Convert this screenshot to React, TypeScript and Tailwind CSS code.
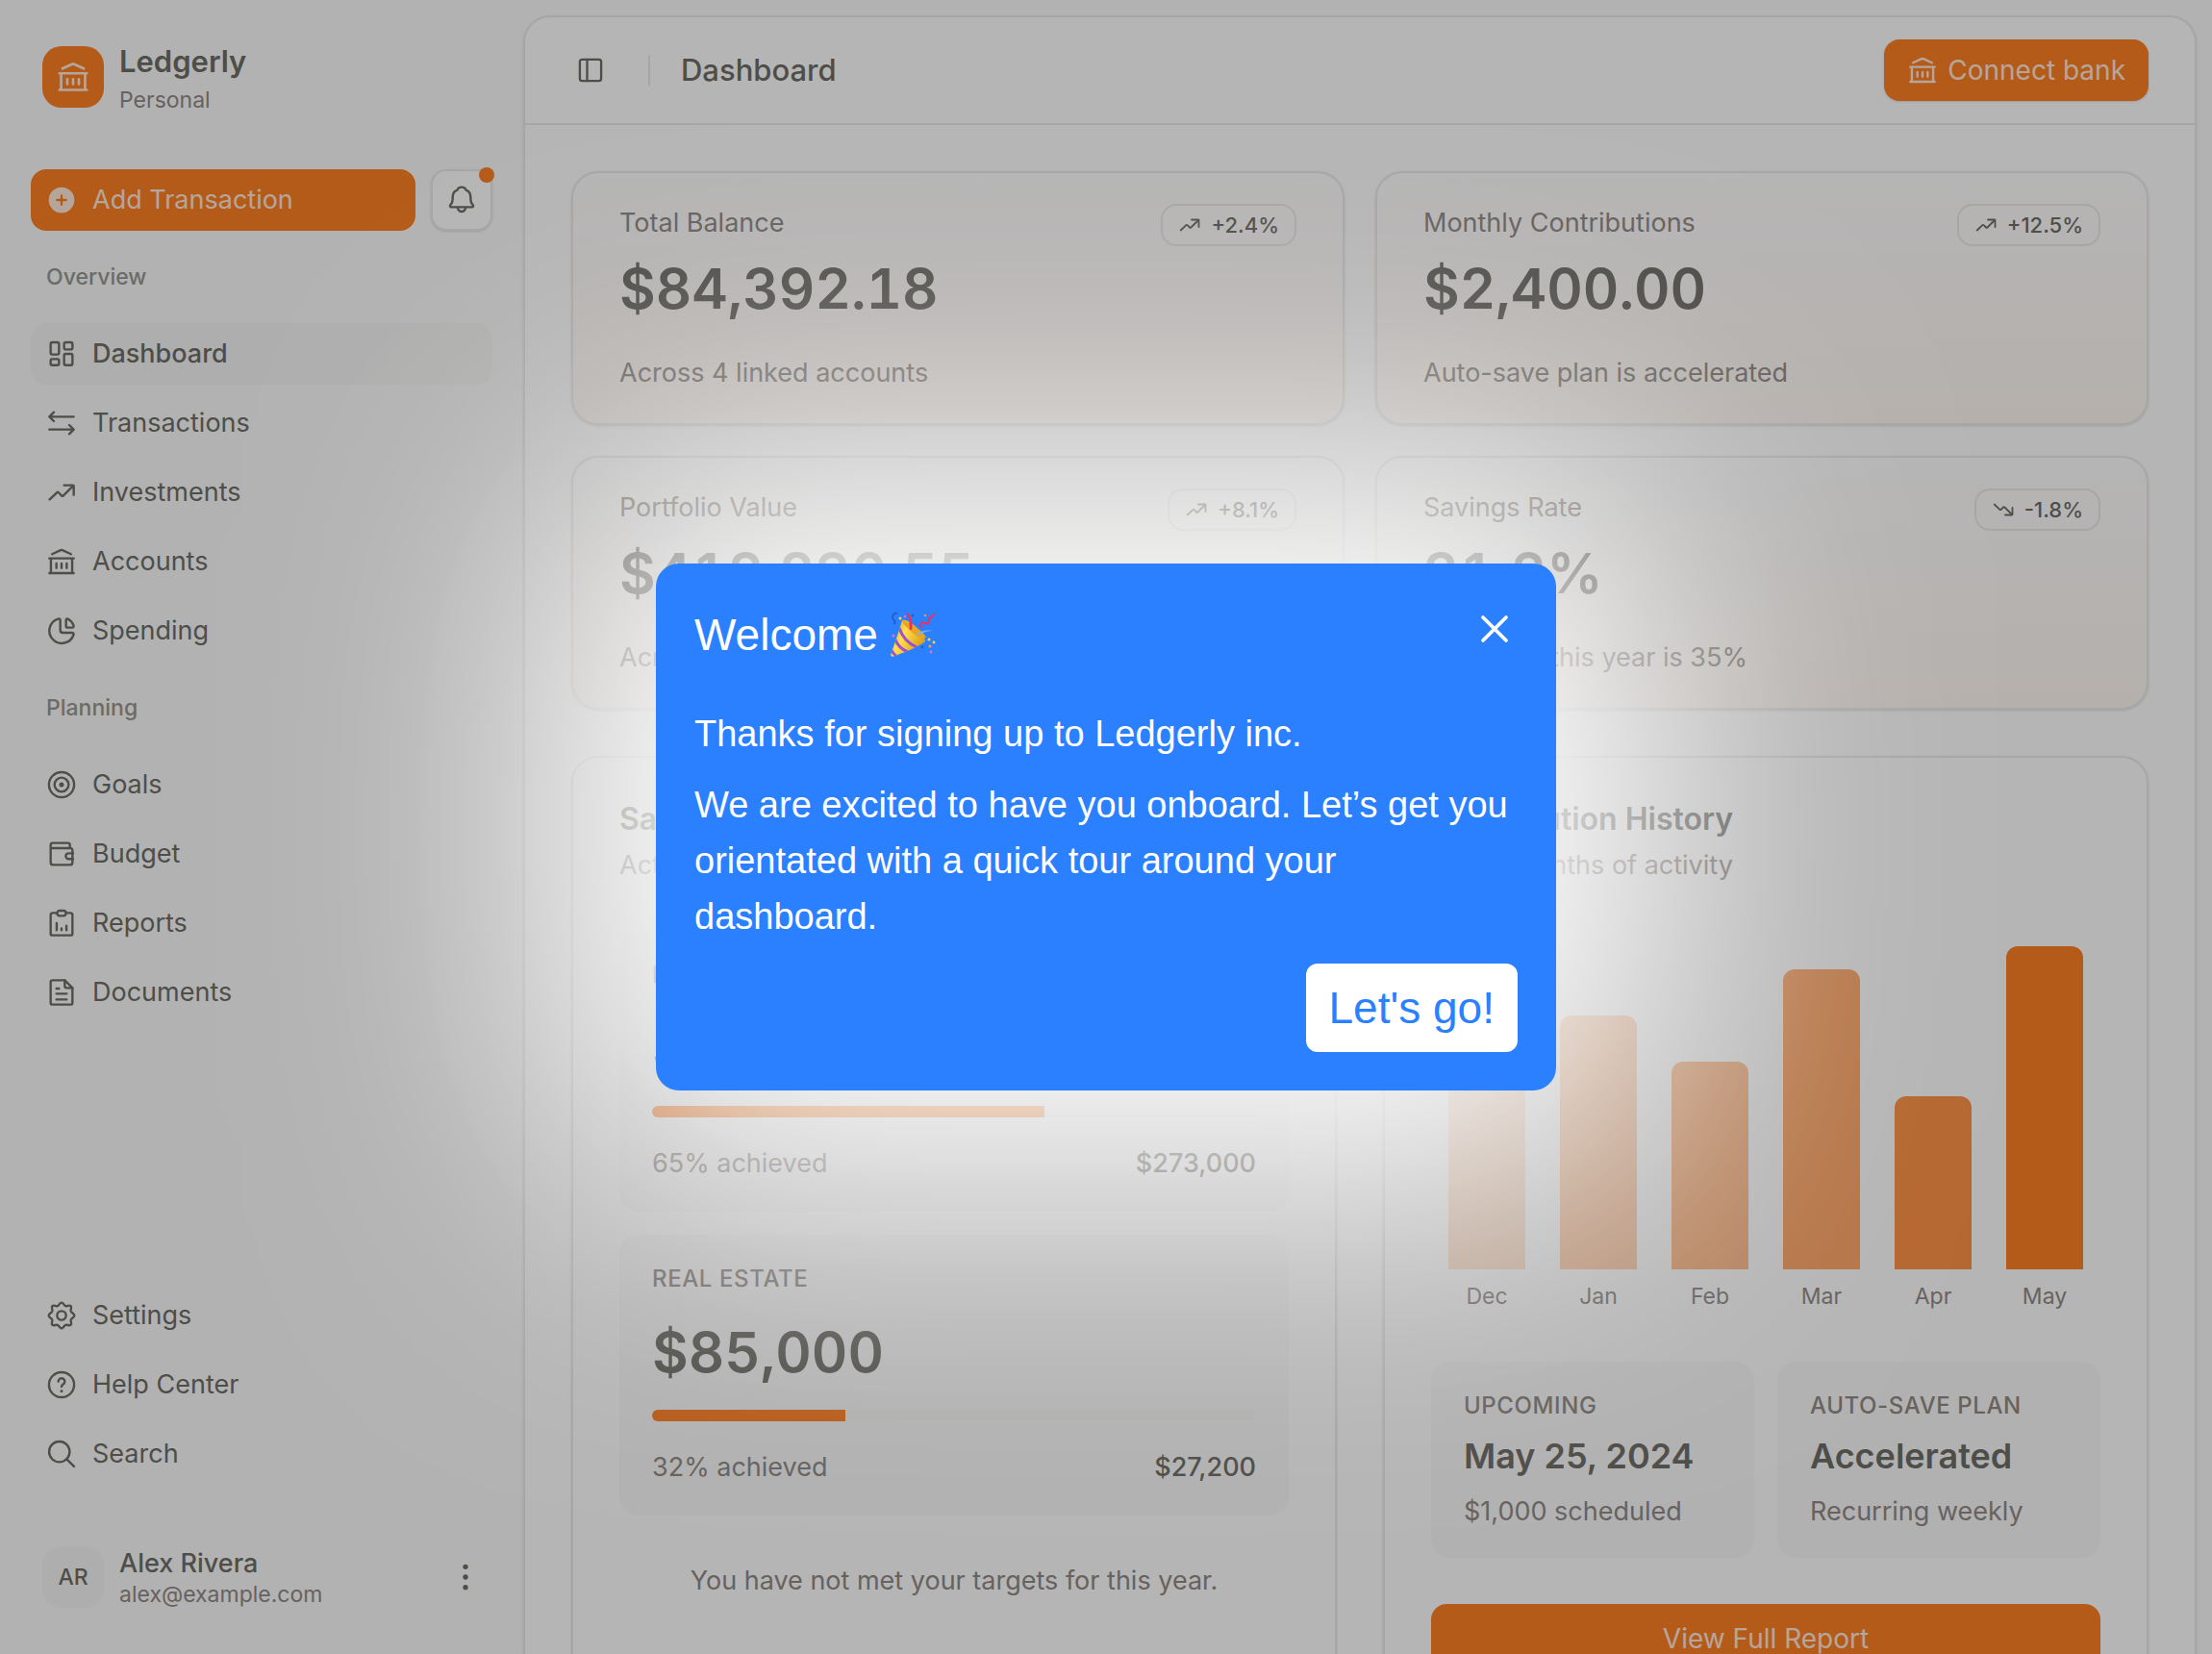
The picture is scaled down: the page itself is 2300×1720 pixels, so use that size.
import React from "react";

const icons = {
  bank: (
    <>
      <path d="M4.600 6.200 11.300 3.100a1.700 1.700 0 0 1 1.400 0l6.700 3.100" />
      <path d="M3.700 9.500V21M20.300 9.500V21M2.500 9.500h19M2.500 21h19M8 13.500v3.500M12 13.500v3.500M16 13.500v3.500" />
    </>
  ),
  bell: (
    <>
      <path d="M4 17.500h16c1 0 1.400-1 .7-1.700-1.300-1.300-1.700-2.300-1.700-4.300V10c0-3-1.500-5-3.600-5.700C15 2.800 13.700 2 12 2s-3 .8-3.400 2.300C6.500 5 5 7 5 10v1.500c0 2-.4 3-1.700 4.300-.7.700-.3 1.700.7 1.700Z" />
      <path d="M9 18a3 3 0 0 0 6 0" />
    </>
  ),
  dashboard: (
    <>
      <rect x="3.500" y="3" width="6.500" height="9.500" rx="1.200" />
      <rect x="14" y="3" width="6.500" height="5.500" rx="1.200" />
      <rect x="3.500" y="16" width="6.500" height="4.800" rx="1.200" />
      <rect x="14" y="12" width="6.500" height="8.800" rx="1.200" />
    </>
  ),
  transfer: (
    <>
      <path d="M21.500 7H2.500M6 3.500 2.500 7 6 10.500" />
      <path d="M2.500 17h19M18 13.500l3.500 3.500-3.500 3.500" />
    </>
  ),
  trendUp: (
    <>
      <path d="m2.700 17.500 5.600-5.300a1 1 0 0 1 1.400 0l2.300 2.300a1 1 0 0 0 1.400 0L21 7" />
      <path d="M14 6.500h7a.5.5 0 0 1 .5.500v7" />
    </>
  ),
  trendDown: (
    <>
      <path d="m2.700 6.500 5.600 5.300a1 1 0 0 0 1.400 0l2.300-2.300a1 1 0 0 1 1.400 0L21 17" />
      <path d="M14 17.500h7a.5.5 0 0 0 .5-.5v-7" />
    </>
  ),
  pie: (
    <>
      <path d="M11 3.700c0-.9-.8-1.300-1.700-1A9.700 9.700 0 1 0 21.400 15c.2-.9-.3-1.500-1.200-1.500H13a2 2 0 0 1-2-2Z" />
      <path d="M15.500 3.500c0-.9.600-1.200 1.400-.8a9 9 0 0 1 4.500 5.300c.2.800-.2 1.500-1 1.500H17a1.500 1.500 0 0 1-1.500-1.500Z" />
    </>
  ),
  target: (
    <>
      <circle cx="12" cy="12" r="9.800" />
      <circle cx="12" cy="12" r="5.500" />
      <circle cx="12" cy="12" r="1" fill="currentColor" />
    </>
  ),
  wallet: (
    <>
      <path d="M18.500 7.500V5A1.500 1.500 0 0 0 17 3.500H5A1.500 1.500 0 0 0 3.500 5v13.500a2 2 0 0 0 2 2h13a2 2 0 0 0 2-2V9a1.500 1.500 0 0 0-1.500-1.500H3.500" />
      <path d="M21 11.500h-3.500a2.200 2.200 0 0 0 0 4.400H21" />
    </>
  ),
  report: (
    <>
      <path d="M8.500 4H5a1.500 1.500 0 0 0-1.500 1.500v14.500A1.500 1.500 0 0 0 5 21.500h14a1.500 1.500 0 0 0 1.500-1.500V5.500A1.500 1.500 0 0 0 19 4h-3.500" />
      <rect x="8.500" y="2.300" width="7" height="4" rx="2" />
      <path d="M8.200 12V17.500M12 16V17.500M15.800 14V17.500" />
    </>
  ),
  file: (
    <>
      <path d="M14.500 2.500H5A1.500 1.500 0 0 0 3.500 4v16A1.500 1.500 0 0 0 5 21.500h14a1.500 1.500 0 0 0 1.500-1.500V8.500Z" />
      <path d="M14.500 2.500V7A1.500 1.500 0 0 0 16 8.500h4.500M8 9h2M8 13h8M8 17.500h8" />
    </>
  ),
  settings: (
    <>
      <path d="M12 2c1.600 0 1.700 2.100 3.200 2.600 1.400.6 2.900-1.100 4 0 1.100 1.200-.5 2.600.1 4.100.6 1.400 2.700 1.600 2.700 3.300s-2.100 1.800-2.700 3.300c-.6 1.400 1.100 2.900 0 4-1.200 1.100-2.600-.5-4.100.1C13.700 20 13.600 22 12 22s-1.700-2-3.200-2.600c-1.500-.6-2.900 1-4.100-.1-1.100-1.100.6-2.600 0-4C4.100 13.800 2 13.700 2 12s2.100-1.900 2.700-3.300c.6-1.500-1-2.900.1-4.100 1.100-1.100 2.600.6 4 0C10.300 4.100 10.400 2 12 2Z" />
      <circle cx="12" cy="12" r="3.500" />
    </>
  ),
  help: (
    <>
      <circle cx="12" cy="12" r="9.800" />
      <path d="M9.500 9.500a2.500 2.500 0 1 1 3.900 2c-.7.500-1.400 1-1.400 2" />
      <path d="M12 17h.01" strokeWidth="2.200" />
    </>
  ),
  search: (
    <>
      <circle cx="10.300" cy="10.300" r="8" />
      <path d="m16 16 5.700 5.700" />
    </>
  ),
  panel: (
    <>
      <rect x="2.500" y="2.500" width="19" height="19" rx="2" />
      <path d="M9 2.500v19" />
    </>
  ),
  close: <path d="M3 3l18 18M21 3 3 21" />,
};

type IconName = keyof typeof icons;

const Icon: React.FC<{ name: IconName; className?: string; stroke?: number }> = ({
  name,
  className = "size-8",
  stroke = 1.8,
}) => (
  <svg
    viewBox="0 0 24 24"
    className={`${className} shrink-0`}
    fill="none"
    stroke="currentColor"
    strokeWidth={stroke}
    strokeLinecap="round"
    strokeLinejoin="round"
    aria-hidden="true"
  >
    {icons[name]}
  </svg>
);

const PartyPopper: React.FC = () => (
  <svg viewBox="0 0 48 48" className="size-12 shrink-0" role="img" aria-label="Party popper">
    <defs>
      <linearGradient id="cone" x1="0" y1="0" x2="1" y2="0.6">
        <stop offset="0" stopColor="#d99a12" />
        <stop offset="0.45" stopColor="#ffdf4d" />
        <stop offset="1" stopColor="#d99a12" />
      </linearGradient>
      <clipPath id="coneClip">
        <path d="M13 9C10 20 5 34 1.500 43.500c-.8 2.500.6 3.700 2.800 3C14 43 27 38 37 31.500 39 26 20 6 13 9Z" />
      </clipPath>
    </defs>
    <path
      d="M13 9C10 20 5 34 1.500 43.500c-.8 2.500.6 3.700 2.800 3C14 43 27 38 37 31.500 39 26 20 6 13 9Z"
      fill="url(#cone)"
    />
    <g clipPath="url(#coneClip)" fill="none" stroke="#a04fd0" strokeWidth="3">
      <path d="M10 17c3 9 9 16 18 20" />
      <path d="M6 29c2 6 6 10 13 13" />
      <path d="M2 40c1 3 3 5 6 7" />
    </g>
    <path d="M13 9c7 0 22 12 25 17.500-3 3.500-11-1-16-6S12 11 13 9Z" fill="#e9a522" />
    <path d="M21 19c-1-5 1-11-4-18 5 0 8 10 6 18Z" fill="#ee2f5b" />
    <path d="M33 17c-2-5 1-7 4-5 3 2 4-1 4-4 0-4 4-1 6-6" fill="none" stroke="#ee2f5b" strokeWidth="2" />
    <path d="M28 24c5-5 12-5 19-4-7 0-12 1-18 5Z" fill="#79b4ff" />
    <path d="M4 13c5-2-2-5-1-8s3-4 5-3" fill="none" stroke="#1f56c8" strokeWidth="1.500" />
    <g fill="#ffd23c">
      <circle cx="11" cy="7" r="1.500" />
      <circle cx="41" cy="29" r="1.500" />
      <circle cx="46" cy="32" r="1.400" />
    </g>
    <g fill="#ff9a2b">
      <circle cx="42" cy="36" r="1.500" />
      <circle cx="37" cy="4" r="1.200" />
    </g>
    <g fill="#f26bb5">
      <circle cx="4" cy="25" r="1.500" />
      <circle cx="43" cy="42" r="1.400" />
      <circle cx="16" cy="5" r="1.200" />
    </g>
    <circle cx="24" cy="4" r="1.200" fill="#1f56c8" />
    <circle cx="34" cy="37" r="1.200" fill="#1f56c8" />
  </svg>
);

interface NavItem {
  icon: IconName;
  label: string;
}

const overview: NavItem[] = [
  { icon: "dashboard", label: "Dashboard" },
  { icon: "transfer", label: "Transactions" },
  { icon: "trendUp", label: "Investments" },
  { icon: "bank", label: "Accounts" },
  { icon: "pie", label: "Spending" },
];

const planning: NavItem[] = [
  { icon: "target", label: "Goals" },
  { icon: "wallet", label: "Budget" },
  { icon: "report", label: "Reports" },
  { icon: "file", label: "Documents" },
];

const support: NavItem[] = [
  { icon: "settings", label: "Settings" },
  { icon: "help", label: "Help Center" },
  { icon: "search", label: "Search" },
];

const NavList: React.FC<{ items: NavItem[]; active?: string }> = ({ items, active }) => (
  <ul className="flex flex-col gap-2">
    {items.map((item) => (
      <li key={item.label}>
        <a
          href="#"
          aria-current={item.label === active ? "page" : undefined}
          className={
            item.label === active
              ? "flex h-16 items-center gap-4 rounded-2xl bg-[#f6f6f5] px-4 font-medium"
              : "flex h-16 items-center gap-4 rounded-2xl px-4"
          }
        >
          <Icon name={item.icon} />
          {item.label}
        </a>
      </li>
    ))}
  </ul>
);

const Sidebar: React.FC = () => (
  <aside className="flex w-[544px] shrink-0 flex-col p-8">
    <div className="flex h-24 items-center gap-4 px-3">
      <div className="flex size-16 items-center justify-center rounded-[20px] bg-[#ff8025] text-[#ffe9da]">
        <Icon name="bank" className="size-9" />
      </div>
      <div className="mt-2">
        <p className="text-[31px] leading-10 font-semibold">Ledgerly</p>
        <p className="text-[23px] leading-10 text-[#918a86]">Personal</p>
      </div>
    </div>

    <div className="mt-12 flex gap-4">
      <button className="flex h-16 flex-1 items-center gap-4 rounded-2xl bg-[#ff8025] px-4 text-[#ffe9da]">
        <svg viewBox="0 0 24 24" className="size-8" aria-hidden="true">
          <circle cx="12" cy="12" r="10" fill="currentColor" />
          <path d="M12 8.500v7M8.500 12h7" stroke="#ff8025" strokeWidth="1.800" strokeLinecap="round" />
        </svg>
        Add Transaction
      </button>
      <button
        aria-label="Notifications"
        className="relative flex size-16 items-center justify-center rounded-2xl border-2 border-[#eaeae9] bg-white shadow-sm"
      >
        <Icon name="bell" />
        <span className="absolute -top-1 -right-1 size-4 rounded-full bg-[#ff8025]"></span>
      </button>
    </div>

    <nav className="mt-4 flex flex-col gap-4">
      <h2 className="flex h-16 items-center px-4 text-[23px] font-medium text-[#989792]">Overview</h2>
      <NavList items={overview} active="Dashboard" />
      <h2 className="flex h-16 items-center px-4 text-[23px] font-medium text-[#989792]">Planning</h2>
      <NavList items={planning} />
    </nav>

    <nav className="mt-auto">
      <NavList items={support} />
    </nav>

    <div className="mt-12 flex h-24 items-center gap-4 px-3">
      <div className="flex size-16 items-center justify-center rounded-[20px] bg-[#f6f6f5] text-[23px] font-medium">
        AR
      </div>
      <div className="mt-1 flex-1">
        <p className="leading-8 font-medium">Alex Rivera</p>
        <p className="text-[23px] leading-8 text-[#918a86]">alex@example.com</p>
      </div>
      <button aria-label="Account menu">
        <svg viewBox="0 0 24 24" className="size-8" fill="currentColor" aria-hidden="true">
          <circle cx="12" cy="4" r="2" />
          <circle cx="12" cy="12" r="2" />
          <circle cx="12" cy="20" r="2" />
        </svg>
      </button>
    </div>
  </aside>
);

interface StatProps {
  label: string;
  value: string;
  change: string;
  note: string;
}

const stats: StatProps[] = [
  { label: "Total Balance", value: "$84,392.18", change: "+2.4%", note: "Across 4 linked accounts" },
  { label: "Monthly Contributions", value: "$2,400.00", change: "+12.5%", note: "Auto-save plan is accelerated" },
  { label: "Portfolio Value", value: "$412,830.55", change: "+8.1%", note: "Across all investments" },
  { label: "Savings Rate", value: "31.2%", change: "-1.8%", note: "Target for this year is 35%" },
];

const StatCard: React.FC<StatProps> = ({ label, value, change, note }) => (
  <section className="h-[264px] rounded-[28px] border-2 border-[#eaeae9] bg-linear-to-t from-[#fff8f3] to-white px-12 pt-8 shadow-sm">
    <div className="flex items-start justify-between">
      <h3 className="leading-10 text-[#918a86]">{label}</h3>
      <span className="flex h-11 items-center gap-2.5 rounded-2xl border-2 border-[#eaeae9] px-4 text-[22px] font-medium">
        <Icon name={change.startsWith("-") ? "trendDown" : "trendUp"} className="size-6" />
        {change}
      </span>
    </div>
    <p className="mt-1 text-[58px] leading-[80px] font-semibold tabular-nums">{value}</p>
    <p className="mt-7 leading-10 text-[#918a86]">{note}</p>
  </section>
);

const targets = [
  { name: "Retirement", goal: "$420,000", percent: 65, saved: "$273,000" },
  { name: "Real estate", goal: "$85,000", percent: 32, saved: "$27,200" },
];

const SavingsTargets: React.FC = () => (
  <section className="rounded-[28px] border-2 border-[#eaeae9] px-12 pt-12 shadow-sm">
    <h3 className="text-[32px] leading-8 font-semibold">Savings Targets</h3>
    <p className="mt-3 leading-10 text-[#918a86]">Active goals for this year</p>
    <div className="mt-12 flex flex-col gap-6">
      {targets.map((target) => (
        <div key={target.name} className="h-[292px] rounded-[20px] bg-[#fbfafa] px-[34px] pt-7">
          <h4 className="text-2xl leading-9 font-medium tracking-wide text-[#918a86] uppercase">{target.name}</h4>
          <p className="mt-[18px] text-[58px] leading-[80px] font-semibold tabular-nums">{target.goal}</p>
          <div className="mt-5 h-3 overflow-hidden rounded-full bg-[#f6f6f5]">
            <div className="h-full bg-[#ff8025]" style={{ width: `${target.percent}%` }}></div>
          </div>
          <div className="mt-7 flex justify-between leading-10">
            <span className="text-[#918a86]">{target.percent}% achieved</span>
            <span className="font-medium">{target.saved}</span>
          </div>
        </div>
      ))}
    </div>
    <p className="mt-12 text-center leading-10 text-[#918a86]">You have not met your targets for this year.</p>
  </section>
);

const months = [
  { name: "Dec", height: 240, opacity: 0.25 },
  { name: "Jan", height: 264, opacity: 0.4 },
  { name: "Feb", height: 216, opacity: 0.55 },
  { name: "Mar", height: 312, opacity: 0.7 },
  { name: "Apr", height: 180, opacity: 0.85 },
  { name: "May", height: 336, opacity: 1 },
];

const plans = [
  { label: "Upcoming", value: "May 25, 2024", note: "$1,000 scheduled" },
  { label: "Auto-save plan", value: "Accelerated", note: "Recurring weekly" },
];

const ContributionHistory: React.FC = () => (
  <section className="rounded-[28px] border-2 border-[#eaeae9] px-12 py-12 shadow-sm">
    <h3 className="text-[32px] leading-8 font-semibold">Contribution History</h3>
    <p className="mt-3 leading-10 text-[#918a86]">Last 6 months of activity</p>
    <div className="mt-16 flex h-[336px] items-end">
      {months.map((month) => (
        <div key={month.name} className="flex flex-1 justify-center">
          <div
            className="w-20 rounded-t-xl bg-[#ff8025]"
            style={{ height: month.height, opacity: month.opacity }}
          ></div>
        </div>
      ))}
    </div>
    <div className="mt-3 flex text-[23px] leading-8 text-[#918a86]">
      {months.map((month) => (
        <span key={month.name} className="flex-1 text-center">
          {month.name}
        </span>
      ))}
    </div>
    <div className="mt-13 grid grid-cols-2 gap-6">
      {plans.map((plan) => (
        <div key={plan.label} className="h-[204px] rounded-[20px] bg-[#fbfafa] px-[34px] pt-7">
          <h4 className="text-2xl leading-9 font-medium tracking-wide text-[#918a86] uppercase">{plan.label}</h4>
          <p className="mt-3 text-4xl leading-11 font-semibold">{plan.value}</p>
          <p className="mt-4 leading-10 text-[#918a86]">{plan.note}</p>
        </div>
      ))}
    </div>
    <button className="mt-12 h-[72px] w-full rounded-2xl bg-[#ff8025] text-[28px] text-[#ffe9da]">
      View Full Report
    </button>
  </section>
);

const WelcomeDialog: React.FC = () => (
  <div className="fixed inset-0 flex items-center justify-center bg-black/29">
    <div className="relative w-[936px]">
      {/* soft white halo spilling over the dimmed page */}
      <div className="absolute -inset-[100px] rounded-[124px] bg-white blur-[150px]"></div>
      <div
        role="dialog"
        aria-modal="true"
        aria-labelledby="welcome-title"
        className="relative rounded-3xl bg-[#2a80ff] p-10 font-['Liberation_Sans',Arial,sans-serif] text-[38px] leading-[58px] text-white"
      >
        <div className="flex items-start justify-between">
          <h2 id="welcome-title" className="flex items-center gap-3 text-[46px] leading-[68px]">
            Welcome <PartyPopper />
          </h2>
          <button aria-label="Close" className="mt-3 mr-2">
            <Icon name="close" className="size-8" stroke={2.8} />
          </button>
        </div>
        <p className="mt-10">Thanks for signing up to Ledgerly inc.</p>
        <p className="mt-4">
          We are excited to have you onboard. Let’s get you orientated with a quick tour around your dashboard.
        </p>
        <div className="mt-5 flex justify-end">
          <button className="rounded-xl bg-white px-6 py-3 text-[46px] leading-[68px] text-[#2a80ff]">Let's go!</button>
        </div>
      </div>
    </div>
  </div>
);

export default function App() {
  return (
    <div className="flex h-screen overflow-hidden bg-[#fbfbfb] font-[Inter,'Liberation_Sans',sans-serif] text-[27px] text-[#6f6e68]">
      <Sidebar />
      <main className="mt-4 mr-4 flex-1 overflow-hidden rounded-t-[28px] border-2 border-b-0 border-[#eaeae9] bg-white shadow-sm">
        <header className="flex h-28 items-center border-b-2 border-[#eaeae9] px-12">
          <button aria-label="Toggle sidebar" className="ml-1.5">
            <Icon name="panel" className="size-7" stroke={2} />
          </button>
          <div className="ml-[46px] h-8 w-0.5 bg-[#eaeae9]"></div>
          <h1 className="ml-8 text-[31px] font-medium">Dashboard</h1>
          <button className="ml-auto flex h-16 items-center gap-2.5 rounded-2xl bg-[#ff8025] px-6 text-[28px] text-[#ffe9da] shadow-sm">
            <Icon name="bank" />
            Connect bank
          </button>
        </header>
        <div className="p-12">
          <div className="grid grid-cols-2 gap-8">
            {stats.map((stat) => (
              <StatCard key={stat.label} {...stat} />
            ))}
          </div>
          <div className="mt-12 grid grid-cols-2 gap-12">
            <SavingsTargets />
            <ContributionHistory />
          </div>
        </div>
      </main>
      <WelcomeDialog />
    </div>
  );
}
